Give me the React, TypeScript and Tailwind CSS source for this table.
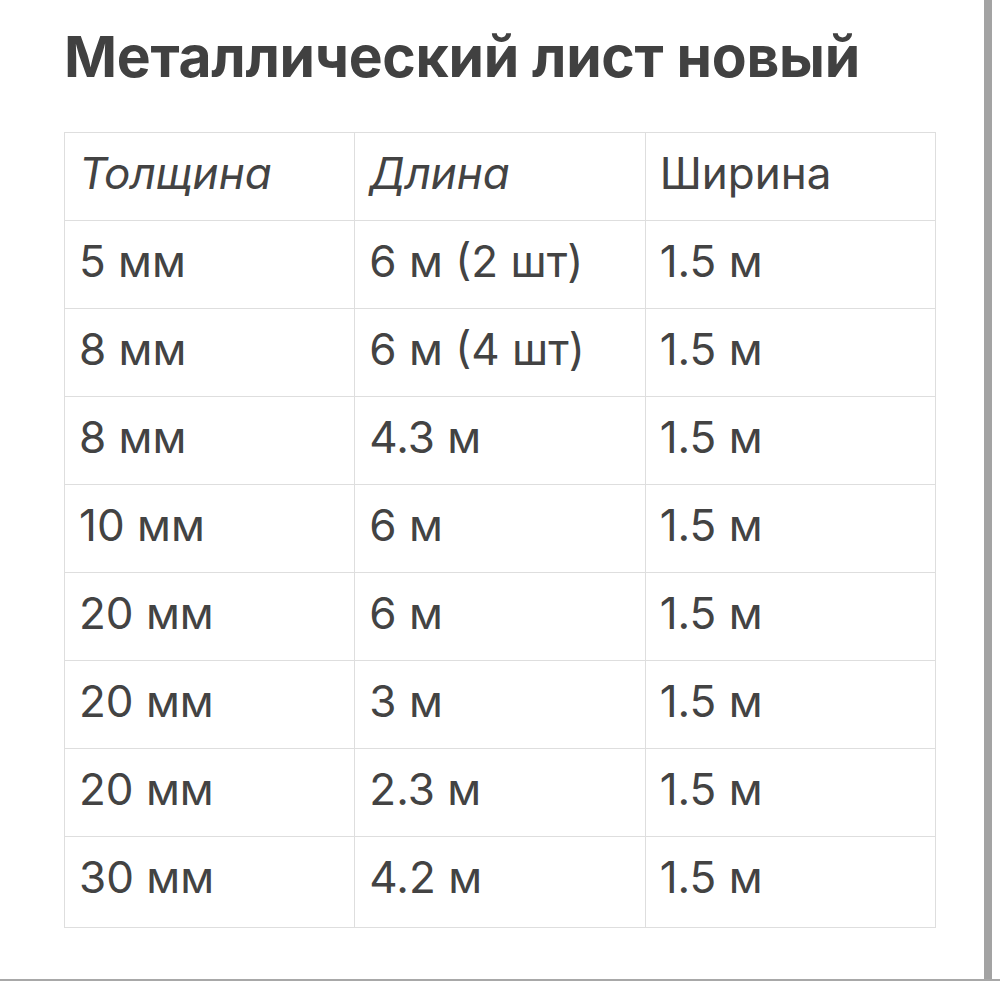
const rows: [string, string, string][] = [
  ['5 мм', '6 м (2 шт)', '1.5 м'],
  ['8 мм', '6 м (4 шт)', '1.5 м'],
  ['8 мм', '4.3 м', '1.5 м'],
  ['10 мм', '6 м', '1.5 м'],
  ['20 мм', '6 м', '1.5 м'],
  ['20 мм', '3 м', '1.5 м'],
  ['20 мм', '2.3 м', '1.5 м'],
  ['30 мм', '4.2 м', '1.5 м'],
];

export default function App() {
  const cell = 'border border-[#dedede] pl-[14px] pr-4 pt-[18px] align-top text-left font-normal';

  return (
    <div className="h-[981px] w-[1000px] bg-white flex flex-col overflow-hidden font-['Inter','Noto_Sans',sans-serif] text-[#434343]">
      <div className="flex flex-1">
        {/* Content */}
        <div className="w-[984px] pl-[64px] pr-[48px] pt-[28px]">
          <h1 className="text-[57px] leading-[57px] font-bold text-[#414141] tracking-[-0.3px]">
            Металлический лист новый
          </h1>

          <table className="mt-[47px] w-[872px] border-collapse table-fixed text-[44px] leading-[44px]">
            <thead>
              <tr className="h-[88px]">
                <th className={`${cell} italic`}>Толщина</th>
                <th className={`${cell} italic`}>Длина</th>
                <th className={cell}>Ширина</th>
              </tr>
            </thead>
            <tbody>
              {rows.map((r, i) => (
                <tr key={i} className={i === rows.length - 1 ? 'h-[91px]' : 'h-[88px]'}>
                  <td className={cell}>{r[0]}</td>
                  <td className={cell}>{r[1]}</td>
                  <td className={cell}>{r[2]}</td>
                </tr>
              ))}
            </tbody>
          </table>
        </div>

        {/* Scroll edge */}
        <div className="w-[8px] bg-[#a3a3a3]" />
        <div className="flex-1" />
      </div>
      <div className="h-[2px] bg-[#a8a8a8]" />
    </div>
  );
}
